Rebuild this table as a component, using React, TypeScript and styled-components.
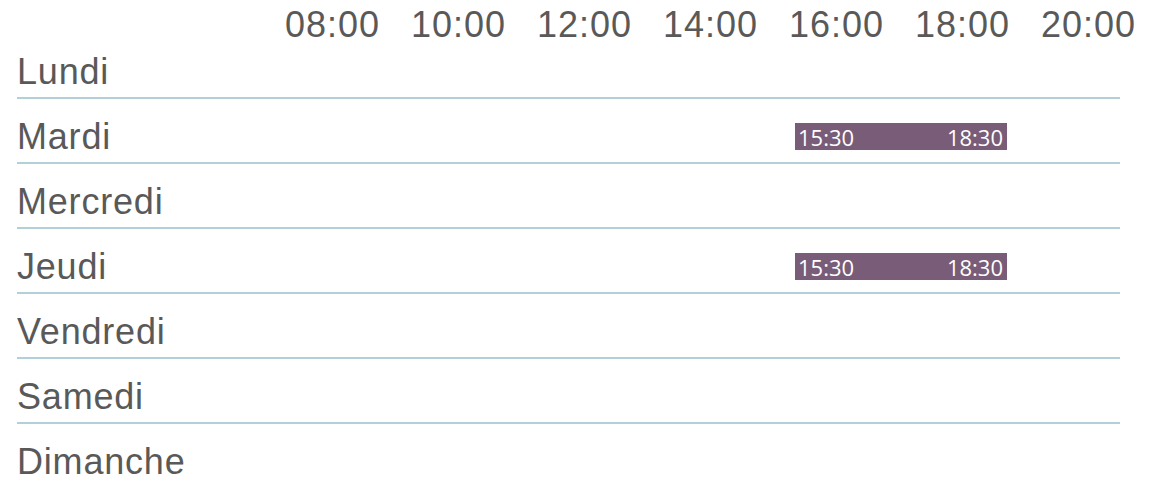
import React from 'react';
import styled, { createGlobalStyle } from 'styled-components';

interface Slot {
  start: number;
  end: number;
}

interface Day {
  name: string;
  slots: Slot[];
}

const hours = ['08:00', '10:00', '12:00', '14:00', '16:00', '18:00', '20:00'];

const FIRST_HOUR = 8;
const LAST_HOUR = 20;

const week: Day[] = [
  { name: 'Lundi', slots: [] },
  { name: 'Mardi', slots: [{ start: 15.5, end: 18.5 }] },
  { name: 'Mercredi', slots: [] },
  { name: 'Jeudi', slots: [{ start: 15.5, end: 18.5 }] },
  { name: 'Vendredi', slots: [] },
  { name: 'Samedi', slots: [] },
  { name: 'Dimanche', slots: [] },
];

const GlobalStyle = createGlobalStyle`
html, body {
  margin: 0;
  padding: 0;
  background: #fff;
  overflow: hidden;
}
`

const Schedule = styled.div`
width: 1157px;
padding: 0 37px 0 17px;
box-sizing: border-box;
font-family: "Liberation Sans", Arial, sans-serif;
color: #595959;
`

const Header = styled.div`
height: 34px;
display: grid;
grid-template-columns: repeat(7, 126px);
padding-left: 268px;
`

const HourLabel = styled.div`
font-size: 36px;
line-height: 1;
letter-spacing: 1px;
padding-top: 7px;
white-space: nowrap;
`

const Row = styled.div`
height: 65px;
box-sizing: border-box;
border-bottom: 2px solid #b2d0d7;
display: flex;
align-items: flex-end;
`

const DayName = styled.div`
width: 248px;
flex-shrink: 0;
font-size: 36px;
line-height: 1;
letter-spacing: 0.8px;
padding-bottom: 7px;
white-space: nowrap;
`

const Track = styled.div`
position: relative;
flex: 1;
align-self: stretch;
margin-right: 7px;
`

const Bar = styled.div`
position: absolute;
top: 24px;
height: 27px;
background: #795c77;
display: flex;
justify-content: space-between;
align-items: center;
padding: 0 4px 0 3px;
box-sizing: border-box;
font-family: "Open Sans", sans-serif;
font-size: 22px;
color: #fff;
`

function formatTime(t: number) {
  const h = Math.floor(t);
  const m = Math.round((t - h) * 60);
  return `${h.toString().padStart(2, '0')}:${m.toString().padStart(2, '0')}`;
}

function toPercent(t: number) {
  return ((t - FIRST_HOUR) / (LAST_HOUR - FIRST_HOUR)) * 100;
}

export default function App() {
  return (
    <>
      <GlobalStyle />
      <Schedule>
        <Header>
          {hours.map((h) => (
            <HourLabel key={h}>{h}</HourLabel>
          ))}
        </Header>
        {week.map((day) => (
          <Row key={day.name}>
            <DayName>{day.name}</DayName>
            <Track>
              {day.slots.map((slot, i) => (
                <Bar
                  key={i}
                  style={{
                    left: `${toPercent(slot.start)}%`,
                    width: `${toPercent(slot.end) - toPercent(slot.start)}%`,
                  }}
                >
                  <span>{formatTime(slot.start)}</span>
                  <span>{formatTime(slot.end)}</span>
                </Bar>
              ))}
            </Track>
          </Row>
        ))}
      </Schedule>
    </>
  );
}
